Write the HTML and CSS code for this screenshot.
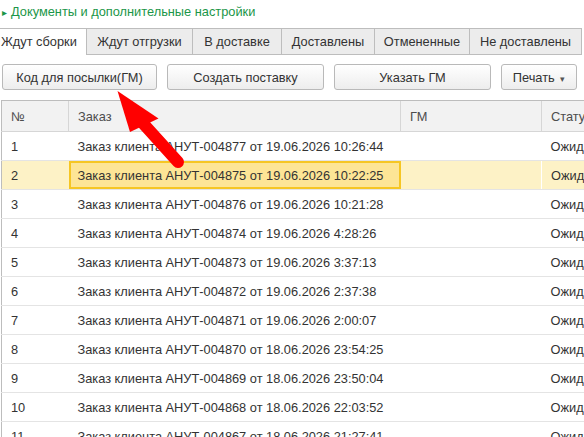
FILE: index.html
```html
<!DOCTYPE html>
<html lang="ru">
<head>
  <meta charset="UTF-8">
  <title>Документы</title>
  <link rel="stylesheet" href="styles.css">
</head>
<body>
  <div class="page">
    <div class="section-title"><span class="marker">&#9656;</span>Документы и дополнительные настройки</div>

    <div class="tabs">
      <div class="tab active">Ждут сборки</div>
      <div class="tab">Ждут отгрузки</div>
      <div class="tab">В доставке</div>
      <div class="tab">Доставлены</div>
      <div class="tab">Отмененные</div>
      <div class="tab">Не доставлены</div>
    </div>

    <div class="toolbar">
      <button class="btn btn-code">Код для посылки(ГМ)</button>
      <button class="btn btn-mid">Создать поставку</button>
      <button class="btn btn-mid">Указать ГМ</button>
      <button class="btn btn-print">Печать <span class="caret">&#9662;</span></button>
    </div>

    <table class="grid">
      <colgroup>
        <col class="c-num"><col class="c-order"><col class="c-gm"><col class="c-status">
      </colgroup>
      <thead>
        <tr><th>№</th><th>Заказ</th><th>ГМ</th><th>Статус</th></tr>
      </thead>
      <tbody>
        <tr><td>1</td><td>Заказ клиента АНУТ-004877 от 19.06.2026 10:26:44</td><td></td><td>Ожидает</td></tr>
        <tr class="selected"><td>2</td><td class="current">Заказ клиента АНУТ-004875 от 19.06.2026 10:22:25</td><td></td><td>Ожидает</td></tr>
        <tr><td>3</td><td>Заказ клиента АНУТ-004876 от 19.06.2026 10:21:28</td><td></td><td>Ожидает</td></tr>
        <tr><td>4</td><td>Заказ клиента АНУТ-004874 от 19.06.2026 4:28:26</td><td></td><td>Ожидает</td></tr>
        <tr><td>5</td><td>Заказ клиента АНУТ-004873 от 19.06.2026 3:37:13</td><td></td><td>Ожидает</td></tr>
        <tr><td>6</td><td>Заказ клиента АНУТ-004872 от 19.06.2026 2:37:38</td><td></td><td>Ожидает</td></tr>
        <tr><td>7</td><td>Заказ клиента АНУТ-004871 от 19.06.2026 2:00:07</td><td></td><td>Ожидает</td></tr>
        <tr><td>8</td><td>Заказ клиента АНУТ-004870 от 18.06.2026 23:54:25</td><td></td><td>Ожидает</td></tr>
        <tr><td>9</td><td>Заказ клиента АНУТ-004869 от 18.06.2026 23:50:04</td><td></td><td>Ожидает</td></tr>
        <tr><td>10</td><td>Заказ клиента АНУТ-004868 от 18.06.2026 22:03:52</td><td></td><td>Ожидает</td></tr>
        <tr><td>11</td><td>Заказ клиента АНУТ-004867 от 18.06.2026 21:27:41</td><td></td><td>Ожидает</td></tr>
      </tbody>
    </table>

    <!-- pointer drawn on top of the toolbar -->
    <svg class="pointer" width="584" height="437" viewBox="0 0 584 437">
      <line x1="178" y1="162" x2="140" y2="120" stroke="#ff0000" stroke-width="12" stroke-linecap="round"/>
      <polygon points="117.5,91 158.5,118.5 130,132" fill="#ff0000"/>
    </svg>
  </div>
</body>
</html>
```

FILE: styles.css
```css
html, body {
  margin: 0;
  padding: 0;
}
body {
  width: 584px;
  height: 437px;
  overflow: hidden;
  background: #fff;
  font-family: "Liberation Sans", Arial, sans-serif;
  font-size: 12.8px;
  color: #333;
}
.page {
  position: relative;
  width: 584px;
  height: 437px;
  overflow: hidden;
}
.section-title {
  height: 28px;
  box-sizing: border-box;
  padding: 4px 0 0 2px;
  color: #1a9648;
  line-height: 16px;
}
.marker {
  display: inline-block;
  width: 9px;
  font-size: 10px;
}
.tabs {
  display: flex;
  height: 27px;
}
.tab {
  box-sizing: border-box;
  height: 27px;
  line-height: 25px;
  text-align: center;
  background: #ececec;
  border: 1px solid #bdbdbd;
  border-left: none;
  white-space: nowrap;
  color: #333;
}
.tab:nth-child(2) { width: 106px; }
.tab:nth-child(3) { width: 89px; }
.tab:nth-child(4) { width: 93px; }
.tab:nth-child(5) { width: 95px; }
.tab:nth-child(6) { width: 112px; }
.tab.active {
  width: 87px;
  text-align: left;
  background: #fff;
  border-bottom: none;
  padding-left: 1px;
}
.toolbar {
  display: flex;
  gap: 10px;
  padding: 9px 0 0 2px;
  height: 26px;
}
.btn {
  box-sizing: border-box;
  height: 26px;
  padding: 0;
  border: 1px solid #b9b9b9;
  border-radius: 3px;
  background: linear-gradient(#ffffff, #ededed);
  font-family: inherit;
  font-size: 12.8px;
  color: #333;
}
.btn-code { width: 155px; }
.btn-mid { width: 157px; }
.btn-print { width: 76px; }
.caret {
  font-size: 9px;
  color: #555;
  margin-left: 2px;
}
.grid {
  margin: 10px 0 0 1px;
  border-collapse: collapse;
  table-layout: fixed;
  width: 689px;
}
.c-num { width: 67px; }
.c-order { width: 332px; }
.c-gm { width: 141px; }
.c-status { width: 149px; }
.grid th {
  height: 30px;
  padding: 0 9px;
  text-align: left;
  font-weight: normal;
  color: #4d4d4d;
  background: #f2f2f2;
  border-top: 1px solid #bdbdbd;
  border-bottom: 1px solid #d6d6d6;
  border-left: 1px solid #d6d6d6;
}
.grid th:first-child {
  border-left: 1px solid #bdbdbd;
}
.grid td {
  height: 28px;
  padding: 0 9px;
  white-space: nowrap;
  overflow: hidden;
  border-bottom: 1px solid #e4e4e4;
}
.grid td:first-child {
  border-left: 1px solid #bdbdbd;
}
.grid tr.selected td {
  background: #fdf2c6;
}
.grid tr.selected td:nth-child(3) {
  border-right: 1px solid #fff;
}
.grid tr.selected td.current {
  background: #fde596;
  box-shadow: inset 0 0 0 2px #f6c623;
}
.pointer {
  position: absolute;
  left: 0;
  top: 0;
  pointer-events: none;
}
```
